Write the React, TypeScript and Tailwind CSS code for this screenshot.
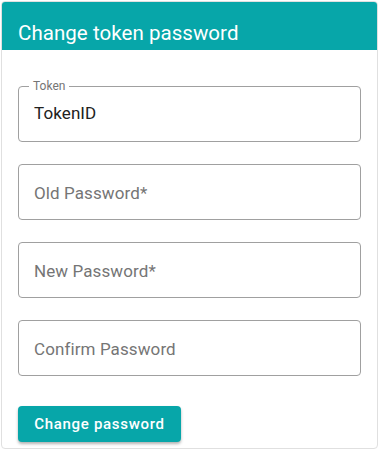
import React from "react";

function Field({ label, value, placeholder }: { label?: string; value?: string; placeholder?: string }) {
  return (
    <div className="relative h-14 w-full rounded border border-[#a0a0a0]">
      {label && (
        <span className="absolute left-[10px] top-[-9px] bg-white px-1 text-[12px] leading-4 text-[#757575]">
          {label}
        </span>
      )}
      {value ? (
        <div className="flex h-full items-center px-[15px]">
          <span className="text-[17px] tracking-[0.1px] text-[#212121]">{value}</span>
        </div>
      ) : (
        <div className="flex h-full items-center px-[15px] pt-[3px]">
          <span className="text-[17px] tracking-[0.1px] text-[#757575]">{placeholder}</span>
        </div>
      )}
    </div>
  );
}

export default function App() {
  return (
    <div className="p-px" style={{ fontFamily: "Roboto, 'Liberation Sans', sans-serif" }}>
      <div className="flex h-[448px] w-[377px] flex-col overflow-hidden rounded border border-[#e0e0e0] bg-white">
        <div className="flex h-[48px] items-end bg-[#07a6a9] px-[16px] pb-[3px]">
          <h1 className="text-[20.5px] leading-7 tracking-[0.05px] text-white">Change token password</h1>
        </div>
        <div className="flex flex-col gap-[22px] px-[16px] pt-[36px]">
          <Field label="Token" value="TokenID" />
          <Field placeholder="Old Password*" />
          <Field placeholder="New Password*" />
          <Field placeholder="Confirm Password" />
        </div>
        <div className="px-[16px] pt-[30px]">
          <button className="h-9 w-[163px] rounded bg-[#07a6a9] text-[15px] font-medium tracking-[0.7px] text-white shadow-[0_2px_3px_rgba(0,0,0,0.3)]">
            Change password
          </button>
        </div>
      </div>
    </div>
  );
}
